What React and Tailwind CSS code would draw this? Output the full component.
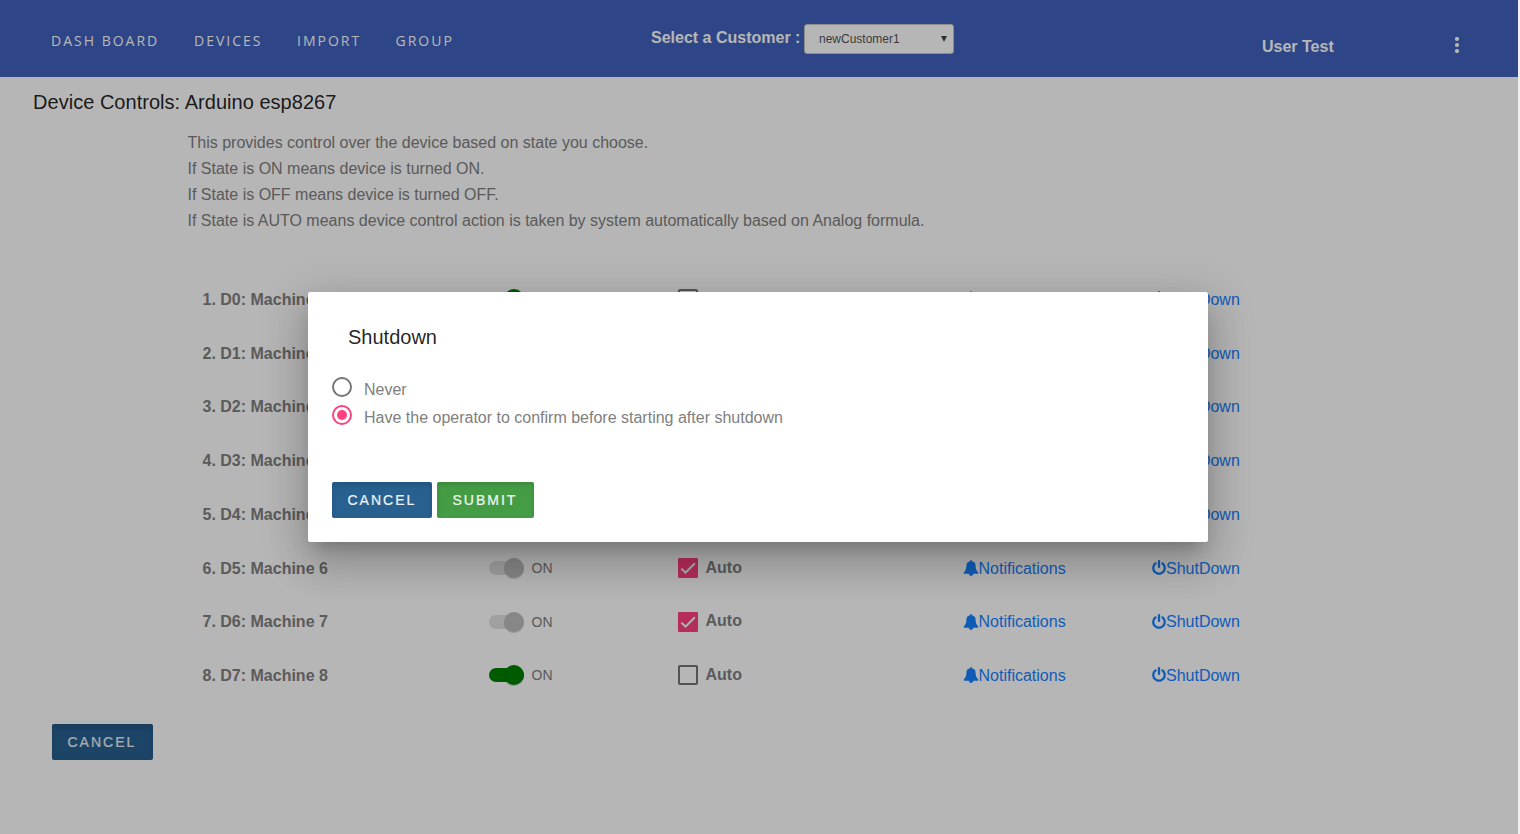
const NAV = [
  { label: "DASH BOARD", width: "w-[143px]" },
  { label: "DEVICES", width: "w-[103px]" },
  { label: "IMPORT", width: "w-[98.5px]" },
  { label: "GROUP", width: "w-[80px]" },
];

const NOTES = [
  "This provides control over the device based on state you choose.",
  "If State is ON means device is turned ON.",
  "If State is OFF means device is turned OFF.",
  "If State is AUTO means device control action is taken by system automatically based on Analog formula.",
];

const MACHINES = [
  { auto: false },
  { auto: false },
  { auto: false },
  { auto: false },
  { auto: false },
  { auto: true },
  { auto: true },
  { auto: false },
];

function Toggle({ disabled }) {
  return (
    <svg className="-mx-1 -my-1 h-7 w-11 shrink-0" viewBox="-4 -4 44 28">
      <rect x="0" y="3" width="35" height="14" rx="7" fill={disabled ? "#000" : "green"} fillOpacity={disabled ? 0.12 : 1} />
      <circle cx="25" cy="11.3" r="10" fill="#000" fillOpacity="0.14" />
      <circle cx="25" cy="10" r="10" fill={disabled ? "#bdbdbd" : "green"} />
    </svg>
  );
}

function Checkbox({ checked }) {
  if (!checked) {
    return <span className="h-5 w-5 shrink-0 rounded-[2px] border-2 border-[#757575]" />;
  }
  return (
    <svg className="h-5 w-5 shrink-0" viewBox="0 0 24 24">
      <rect width="24" height="24" rx="1.5" fill="#ff4081" />
      <path d="M4.1,12.7 9,17.6 20.3,6.3" fill="none" stroke="#fafafa" strokeWidth="2.4" />
    </svg>
  );
}

function BellIcon() {
  return (
    <svg className="h-4 w-4 shrink-0" viewBox="0 0 1792 1792" fill="currentColor">
      <path d="M912 1696q0-16-16-16-59 0-101.500-42.500t-42.500-101.500q0-16-16-16t-16 16q0 73 51.500 124.500t124.500 51.500q16 0 16-16zm816-288q0 52-38 90t-90 38h-448q0 106-75 181t-181 75-181-75-75-181h-448q-52 0-90-38t-38-90q50-42 91-88t85-119.500 74.500-158.500 50-206 19.500-260q0-152 117-282.500t307-158.500q-8-19-8-39 0-40 28-68t68-28 68 28 28 68q0 20-8 39 190 28 307 158.500t117 282.500q0 139 19.500 260t50 206 74.500 158.500 85 119.500 91 88z" />
    </svg>
  );
}

function PowerIcon() {
  return (
    <svg className="h-4 w-[14px] shrink-0" viewBox="128 0 1536 1792" fill="currentColor">
      <path d="M1664 896q0 156-61 298t-164 245-245 164-298 61-298-61-245-164-164-245-61-298q0-182 80.500-343t226.500-270q43-32 95.500-25t83.500 50q32 42 24.500 94.500t-49.500 84.500q-98 74-151.500 181t-53.500 228q0 104 40.500 198.500t109.500 163.500 163.500 109.500 198.500 40.500 198.500-40.500 163.500-109.500 109.500-163.500 40.500-198.500q0-121-53.500-228t-151.500-181q-42-32-49.500-84.500t24.500-94.500q31-43 84-50t95 25q146 109 226.500 270t80.500 343zm-640-768v640q0 52-38 90t-90 38-90-38-38-90v-640q0-52 38-90t90-38 90 38 38 90z" />
    </svg>
  );
}

function Button({ children, color }) {
  return (
    <button
      className={`${color} h-9 rounded-[2px] pl-[15.5px] text-left text-sm tracking-[2px] text-white/90 shadow-[inset_0_3px_5px_rgba(0,0,0,0.125)] [-webkit-text-stroke:0.2px]`}
    >
      {children}
    </button>
  );
}

function MachineRow({ index, auto }) {
  return (
    <li className="flex h-[53.75px] items-center pl-[202.5px]">
      <span className="w-[286.5px] pt-[1.5px] font-bold">{`${index + 1}. D${index}: Machine ${index + 1}`}</span>
      <span className="flex w-[189px] items-center gap-[6.5px] text-sm">
        <Toggle disabled={auto} />
        <span>ON</span>
      </span>
      <span className="flex w-[285px] items-center gap-[7.5px] font-bold">
        <Checkbox checked={auto} />
        <span className="-mt-[0.5px]">Auto</span>
      </span>
      <a className="flex w-[189px] items-center text-[#1682ff]">
        <BellIcon />
        <span className="-ml-[0.5px] pt-[1.5px]">Notifications</span>
      </a>
      <a className="flex items-center text-[#1682ff]">
        <PowerIcon />
        <span className="pt-[1.5px]">ShutDown</span>
      </a>
    </li>
  );
}

function Header() {
  return (
    <header className="flex h-[77px] bg-[#4162be] text-white">
      <nav className="flex w-[651px] pl-[51px] pt-[31px] font-['Open_Sans',sans-serif] text-sm leading-5 tracking-[2px]">
        {NAV.map((item) => (
          <a key={item.label} className={`${item.width} whitespace-nowrap`}>
            {item.label}
          </a>
        ))}
      </nav>
      <div className="flex w-[611px] items-start pt-6">
        <span className="w-[153px] pt-0.5 font-bold leading-6">Select a Customer :</span>
        <div className="flex h-[30px] w-[150px] items-center justify-between rounded-[3px] border border-[#c4c4c4] bg-white pl-[14px] pr-[6px] text-xs text-[#555]">
          <span>newCustomer1</span>
          <svg className="h-[6px] w-[6px]" viewBox="0 0 6 6" fill="#444">
            <path d="M0 0h6L3 6z" />
          </svg>
        </div>
      </div>
      <span className="w-[192px] pt-[35px] font-bold leading-6">User Test</span>
      <svg className="mt-[37px] h-4 w-[6px]" viewBox="0 0 6 16" fill="#fff">
        <circle cx="3" cy="2" r="2.1" />
        <circle cx="3" cy="8" r="2.1" />
        <circle cx="3" cy="14" r="2.1" />
      </svg>
    </header>
  );
}

function ShutdownDialog() {
  return (
    <div className="absolute inset-0 flex items-center justify-center bg-black/[0.288] pr-0.5">
      <section className="h-[250px] w-[900px] rounded-[2px] bg-white p-6 shadow-[0_11px_15px_-7px_rgba(0,0,0,0.2),0_24px_38px_3px_rgba(0,0,0,0.14),0_9px_46px_8px_rgba(0,0,0,0.12)]">
        <h2 className="pl-4 pt-[5px] text-xl leading-8 text-black/[0.87]">Shutdown</h2>
        <div className="mt-6 flex h-7 gap-3">
          <span className="h-5 w-5 rounded-full border-2 border-[#757575]" />
          <span className="pt-px leading-6">Never</span>
        </div>
        <div className="flex h-7 gap-3">
          <span className="flex h-5 w-5 items-center justify-center rounded-full border-2 border-[#ff4081]">
            <span className="h-[10px] w-[10px] rounded-full bg-[#ff4081]" />
          </span>
          <span className="pt-px leading-6">Have the operator to confirm before starting after shutdown</span>
        </div>
        <div className="mt-[49px] flex gap-[5px]">
          <Button color="w-[100px] bg-[#286090]">CANCEL</Button>
          <Button color="w-[97px] bg-[#449d44]">SUBMIT</Button>
        </div>
      </section>
    </div>
  );
}

export default function App() {
  return (
    <div className="h-[834px] w-[1520px] overflow-hidden bg-[#f1f1f1] font-['Liberation_Sans',Arial,sans-serif] text-base text-[#808080]">
      <div className="relative h-full w-[1518px] bg-white">
        <Header />
        <main>
          <h1 className="pl-[33px] pt-[9px] text-xl leading-8 tracking-[0.03px] text-black/[0.87]">
            Device Controls: Arduino esp8267
          </h1>
          <div className="pl-[187.5px] pt-3 leading-[26px]">
            {NOTES.map((note) => (
              <p key={note}>{note}</p>
            ))}
          </div>
          <ul className="mt-[38.3px]">
            {MACHINES.map((machine, index) => (
              <MachineRow key={index} index={index} auto={machine.auto} />
            ))}
          </ul>
          <div className="mt-[21.7px] pl-[52px]">
            <Button color="w-[101px] bg-[#286090]">CANCEL</Button>
          </div>
        </main>
        <ShutdownDialog />
      </div>
    </div>
  );
}
